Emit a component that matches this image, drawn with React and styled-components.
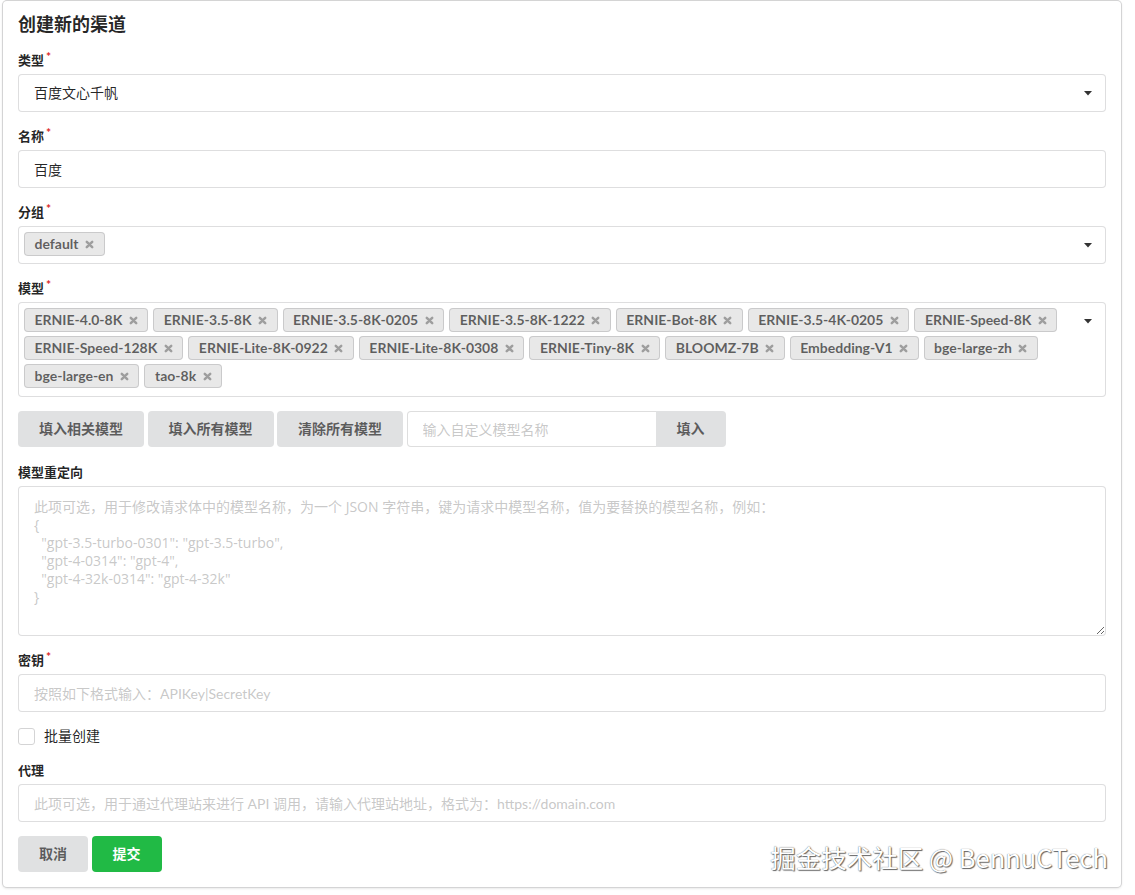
import React from "react";
import styled, { createGlobalStyle } from "styled-components";

const FONT = `Lato, "Noto Sans CJK SC", "Helvetica Neue", Arial, sans-serif`;

const GlobalStyle = createGlobalStyle`
	html, body {
		margin: 0;
		padding: 0;
		background: #fff;
	}
	body {
		font-family: ${FONT};
		font-size: 14px;
		line-height: 1.4285em;
		color: rgba(0, 0, 0, 0.87);
	}
	* {
		box-sizing: border-box;
	}
`;

const Page = styled.div`
	position: relative;
	padding: 1px 14px 8px 3px;
`;

const Card = styled.div`
	background: #fff;
	border-radius: 4px;
	box-shadow: 0 1px 3px 0 #d4d4d5, 0 0 0 1px #d4d4d5;
	padding: 12px 15px 15px;
`;

const Title = styled.div`
	font-size: 18px;
	font-weight: 700;
	line-height: 23px;
	color: rgba(0, 0, 0, 0.85);
	margin-bottom: 14px;
`;

const Field = styled.div`
	margin-bottom: ${props => (props.$gap ? props.$gap : 14)}px;
`;

const FieldLabel = styled.label`
	display: block;
	font-size: 13px;
	font-weight: 700;
	line-height: 20px;
	margin-bottom: 4px;
	color: rgba(0, 0, 0, 0.87);

	&::after {
		content: ${props => (props.$required ? "'*'" : "none")};
		color: #db2828;
		font-size: 12px;
		margin-left: 2px;
		vertical-align: top;
		position: relative;
		top: -3px;
	}
`;

const TextInput = styled.input`
	display: block;
	width: 100%;
	height: 38px;
	padding: 0 15px;
	font-family: ${FONT};
	font-size: 14px;
	color: rgba(0, 0, 0, 0.87);
	border: 1px solid rgba(34, 36, 38, 0.15);
	border-radius: 4px;
	outline: none;
	background: #fff;

	&::placeholder {
		color: rgba(191, 191, 191, 0.87);
	}
`;

const SelectBox = styled.div`
	display: flex;
	align-items: flex-start;
	min-height: 38px;
	border: 1px solid rgba(34, 36, 38, 0.15);
	border-radius: 4px;
	background: #fff;
`;

const SelectValue = styled.div`
	flex: 1;
	line-height: 36px;
	padding-left: 15px;
	font-size: 14px;
	color: rgba(0, 0, 0, 0.87);
`;

const TagList = styled.div`
	flex: 1;
	display: flex;
	flex-wrap: wrap;
	padding: 3px 0 ${props => (props.$many ? 6 : 5)}px 5px;
`;

const Tag = styled.span`
	display: inline-flex;
	align-items: center;
	height: 24px;
	margin: 2px 5px 2px 0;
	padding: 0 10.5px;
	font-size: 14px;
	font-weight: 700;
	line-height: 14px;
	color: rgba(0, 0, 0, 0.6);
	background: #e8e8e8;
	border-radius: 4px;
	box-shadow: inset 0 0 0 1px rgba(34, 36, 38, 0.15);
	white-space: nowrap;
`;

const RemoveIcon = styled.svg`
	width: 9px;
	height: 9px;
	margin-left: 6.5px;
	flex-shrink: 0;
`;

const CaretCell = styled.div`
	width: 34px;
	height: 36px;
	flex-shrink: 0;
	display: flex;
	align-items: center;
	justify-content: center;
`;

const ButtonRow = styled.div`
	display: flex;
	align-items: center;
`;

const Button = styled.button`
	height: 36px;
	padding: 0 21px;
	margin-right: 3.5px;
	font-family: ${FONT};
	font-size: 14px;
	font-weight: 700;
	line-height: 14px;
	border: none;
	border-radius: 4px;
	cursor: pointer;
	color: ${props => (props.$primary ? "#fff" : "rgba(0, 0, 0, 0.6)")};
	background: ${props => (props.$primary ? "#21ba45" : "#e0e1e2")};
`;

const ActionInput = styled.div`
	display: inline-flex;
	height: 36px;
`;

const ActionField = styled.input`
	width: 249px;
	height: 36px;
	padding: 0 15px;
	font-family: ${FONT};
	font-size: 14px;
	border: 1px solid rgba(34, 36, 38, 0.15);
	border-right: none;
	border-radius: 4px 0 0 4px;
	outline: none;

	&::placeholder {
		color: rgba(191, 191, 191, 0.87);
	}
`;

const ActionButton = styled(Button)`
	margin: 0;
	border-radius: 0 4px 4px 0;
`;

const TextArea = styled.textarea`
	display: block;
	width: 100%;
	height: 150px;
	padding: 11px 15px;
	font-family: "Open Sans", "Noto Sans CJK SC", sans-serif;
	font-size: 14px;
	line-height: 18px;
	border: 1px solid rgba(34, 36, 38, 0.15);
	border-radius: 4px;
	outline: none;
	resize: vertical;

	&::placeholder {
		color: rgba(191, 191, 191, 0.87);
	}
`;

const CheckField = styled.label`
	display: flex;
	align-items: center;
	height: 20px;
	margin-bottom: 14px;
	font-size: 14px;
	cursor: pointer;
`;

const CheckBox = styled.span`
	width: 17px;
	height: 17px;
	border: 1px solid #d4d4d5;
	border-radius: 3px;
	background: #fff;
	margin-right: 9px;
`;

const Watermark = styled.div`
	position: absolute;
	right: 27px;
	top: 839px;
	font-family: "Noto Sans CJK SC", sans-serif;
	font-size: 25.5px;
	line-height: 36px;
	color: #fff;
	text-shadow: 0 0 1px #555, 1px 1px 1px #666;
	pointer-events: none;
`;

const MODELS = [
	"ERNIE-4.0-8K",
	"ERNIE-3.5-8K",
	"ERNIE-3.5-8K-0205",
	"ERNIE-3.5-8K-1222",
	"ERNIE-Bot-8K",
	"ERNIE-3.5-4K-0205",
	"ERNIE-Speed-8K",
	"ERNIE-Speed-128K",
	"ERNIE-Lite-8K-0922",
	"ERNIE-Lite-8K-0308",
	"ERNIE-Tiny-8K",
	"BLOOMZ-7B",
	"Embedding-V1",
	"bge-large-zh",
	"bge-large-en",
	"tao-8k",
];

const REDIRECT_PLACEHOLDER = `此项可选，用于修改请求体中的模型名称，为一个 JSON 字符串，键为请求中模型名称，值为要替换的模型名称，例如：
{
  "gpt-3.5-turbo-0301": "gpt-3.5-turbo",
  "gpt-4-0314": "gpt-4",
  "gpt-4-32k-0314": "gpt-4-32k"
}`;

function Caret() {
	return (
		<CaretCell>
			<svg width="8" height="5" viewBox="0 0 8 5">
				<polygon points="0,0 8,0 4,4.5" fill="rgba(0,0,0,0.8)" />
			</svg>
		</CaretCell>
	);
}

function Chip({ children }) {
	return (
		<Tag>
			{children}
			<RemoveIcon viewBox="0 0 10 10">
				<path d="M2 2L8 8M8 2L2 8" stroke="#9e9e9e" strokeWidth="2.8" strokeLinecap="round" fill="none" />
			</RemoveIcon>
		</Tag>
	);
}

export default function App() {
	return (
		<Page>
			<GlobalStyle />
			<Card>
				<Title>创建新的渠道</Title>

				<Field>
					<FieldLabel $required>类型</FieldLabel>
					<SelectBox>
						<SelectValue>百度文心千帆</SelectValue>
						<Caret />
					</SelectBox>
				</Field>

				<Field>
					<FieldLabel $required>名称</FieldLabel>
					<TextInput defaultValue="百度" />
				</Field>

				<Field>
					<FieldLabel $required>分组</FieldLabel>
					<SelectBox>
						<TagList>
							<Chip>default</Chip>
						</TagList>
						<Caret />
					</SelectBox>
				</Field>

				<Field>
					<FieldLabel $required>模型</FieldLabel>
					<SelectBox>
						<TagList $many>
							{MODELS.map(m => (
								<Chip key={m}>{m}</Chip>
							))}
						</TagList>
						<Caret />
					</SelectBox>
				</Field>

				<Field $gap={15}>
					<ButtonRow>
						<Button type="button">填入相关模型</Button>
						<Button type="button">填入所有模型</Button>
						<Button type="button">清除所有模型</Button>
						<ActionInput>
							<ActionField placeholder="输入自定义模型名称" />
							<ActionButton type="button">填入</ActionButton>
						</ActionInput>
					</ButtonRow>
				</Field>

				<Field>
					<FieldLabel>模型重定向</FieldLabel>
					<TextArea placeholder={REDIRECT_PLACEHOLDER} />
				</Field>

				<Field>
					<FieldLabel $required>密钥</FieldLabel>
					<TextInput placeholder="按照如下格式输入：APIKey|SecretKey" />
				</Field>

				<CheckField>
					<CheckBox />
					批量创建
				</CheckField>

				<Field>
					<FieldLabel>代理</FieldLabel>
					<TextInput placeholder="此项可选，用于通过代理站来进行 API 调用，请输入代理站地址，格式为：https://domain.com" />
				</Field>

				<ButtonRow>
					<Button type="button">取消</Button>
					<Button type="button" $primary>提交</Button>
				</ButtonRow>
			</Card>
			<Watermark>掘金技术社区 @ BennuCTech</Watermark>
		</Page>
	);
}
